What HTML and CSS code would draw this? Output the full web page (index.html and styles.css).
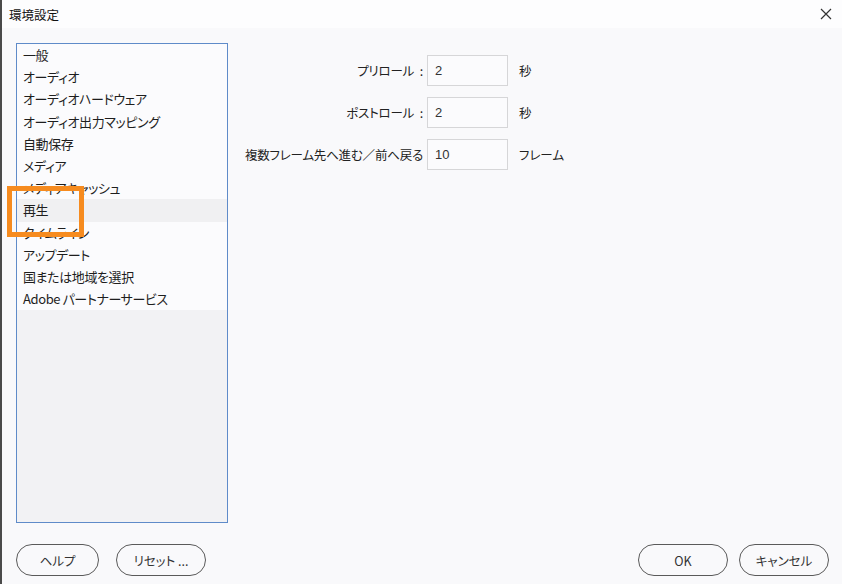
FILE: index.html
```html
<!DOCTYPE html>
<html lang="ja">
<head>
<meta charset="utf-8">
<link rel="stylesheet" href="styles.css">
</head>
<body>
<div class="window">
  <div class="titlebar">
    <span class="title">環境設定</span>
    <svg class="close" width="12" height="12" viewBox="0 0 12 12"><path d="M1 1 L11 11 M11 1 L1 11" stroke="#333" stroke-width="1.2" fill="none"/></svg>
  </div>
  <div class="main">
    <div class="list">
      <div class="items">
        <div class="item">一般</div>
        <div class="item">オーディオ</div>
        <div class="item">オーディオハードウェア</div>
        <div class="item">オーディオ出力マッピング</div>
        <div class="item">自動保存</div>
        <div class="item">メディア</div>
        <div class="item">メディアキャッシュ</div>
        <div class="item selected">再生</div>
        <div class="item">タイムライン</div>
        <div class="item">アップデート</div>
        <div class="item">国または地域を選択</div>
        <div class="item">Adobe パートナーサービス</div>
      </div>
      <div class="filler"></div>
    </div>
    <div class="settings">
      <div class="row"><span class="label">プリロール <span class="colon">:</span></span><div class="input">2</div><span class="unit">秒</span></div>
      <div class="row"><span class="label">ポストロール <span class="colon">:</span></span><div class="input">2</div><span class="unit">秒</span></div>
      <div class="row"><span class="label">複数フレーム先へ進む／前へ戻る</span><div class="input">10</div><span class="unit">フレーム</span></div>
    </div>
  </div>
  <div class="footer">
    <div class="group">
      <button class="btn">ヘルプ</button>
      <button class="btn wide">リセット ...</button>
    </div>
    <div class="group right">
      <button class="btn">OK</button>
      <button class="btn">キャンセル</button>
    </div>
  </div>
  <div class="highlight"></div>
</div>
</body>
</html>
```
FILE: styles.css
```css
* { box-sizing: border-box; }
html, body { margin: 0; padding: 0; }
body {
  width: 842px;
  height: 584px;
  background: #f9f9fb;
  font-family: "Noto Sans CJK JP", "Noto Sans", sans-serif;
  font-feature-settings: "palt";
  font-size: 13px;
  color: #1a1a1a;
  overflow: hidden;
}
.window {
  position: relative;
  width: 842px;
  height: 584px;
  border-left: 2px solid #4a4a4a;
  display: flex;
  flex-direction: column;
}
.titlebar {
  height: 28px;
  display: flex;
  align-items: center;
  justify-content: space-between;
  padding: 0 10px 0 7px;
  background: #fdfdfe;
}
.title { font-size: 12.5px; color: #111; }
.main {
  display: flex;
  padding: 15px 0 0 14px;
  height: 495px;
}
.list {
  width: 212px;
  height: 480px;
  border: 1px solid #5f8bc9;
  display: flex;
  flex-direction: column;
  background: #f2f2f4;
}
.items { background: #fbfbfd; }
.item {
  height: 22.2px;
  line-height: 22px;
  padding-left: 6px;
  font-size: 13px;
  letter-spacing: -0.4px;
  color: #1e1e1e;
  white-space: nowrap;
}
.item.selected { background: #f0f0f2; }
.filler { flex: 1; }
.settings {
  padding-top: 12px;
  padding-left: 13px;
  display: flex;
  flex-direction: column;
  gap: 11px;
}
.row {
  display: flex;
  align-items: center;
  height: 31px;
}
.label {
  width: 186px;
  text-align: right;
  padding-right: 4px;
  font-size: 12.5px;
  letter-spacing: -0.2px;
  color: #222;
  white-space: nowrap;
}
.colon { margin-left: 3px; }
.input {
  width: 81px;
  height: 31px;
  border: 1px solid #d6d6d8;
  background: #fbfbfd;
  padding-left: 7px;
  line-height: 29px;
  color: #333;
  font-family: "Liberation Sans", "Noto Sans", sans-serif;
  font-size: 13px;
}
.unit { margin-left: 11px; font-size: 12.5px; color: #222; }
.footer {
  display: flex;
  justify-content: space-between;
  padding: 21px 13px 0 14px;
}
.group { display: flex; gap: 17px; }
.group.right { gap: 11px; }
.btn {
  width: 83px;
  height: 32px;
  border: 1.5px solid #5a5a5a;
  border-radius: 16px;
  background: #f9f9fb;
  font-family: "Noto Sans CJK JP", "Noto Sans", sans-serif;
  font-feature-settings: "palt";
  font-size: 12.5px;
  color: #333;
  padding: 0;
}
.btn.wide { width: 90px; }
.group.right .btn { width: 90px; }
.highlight {
  position: absolute;
  left: 5px;
  top: 186px;
  width: 77px;
  height: 51px;
  border: 5px solid #f68b1f;
}
```
